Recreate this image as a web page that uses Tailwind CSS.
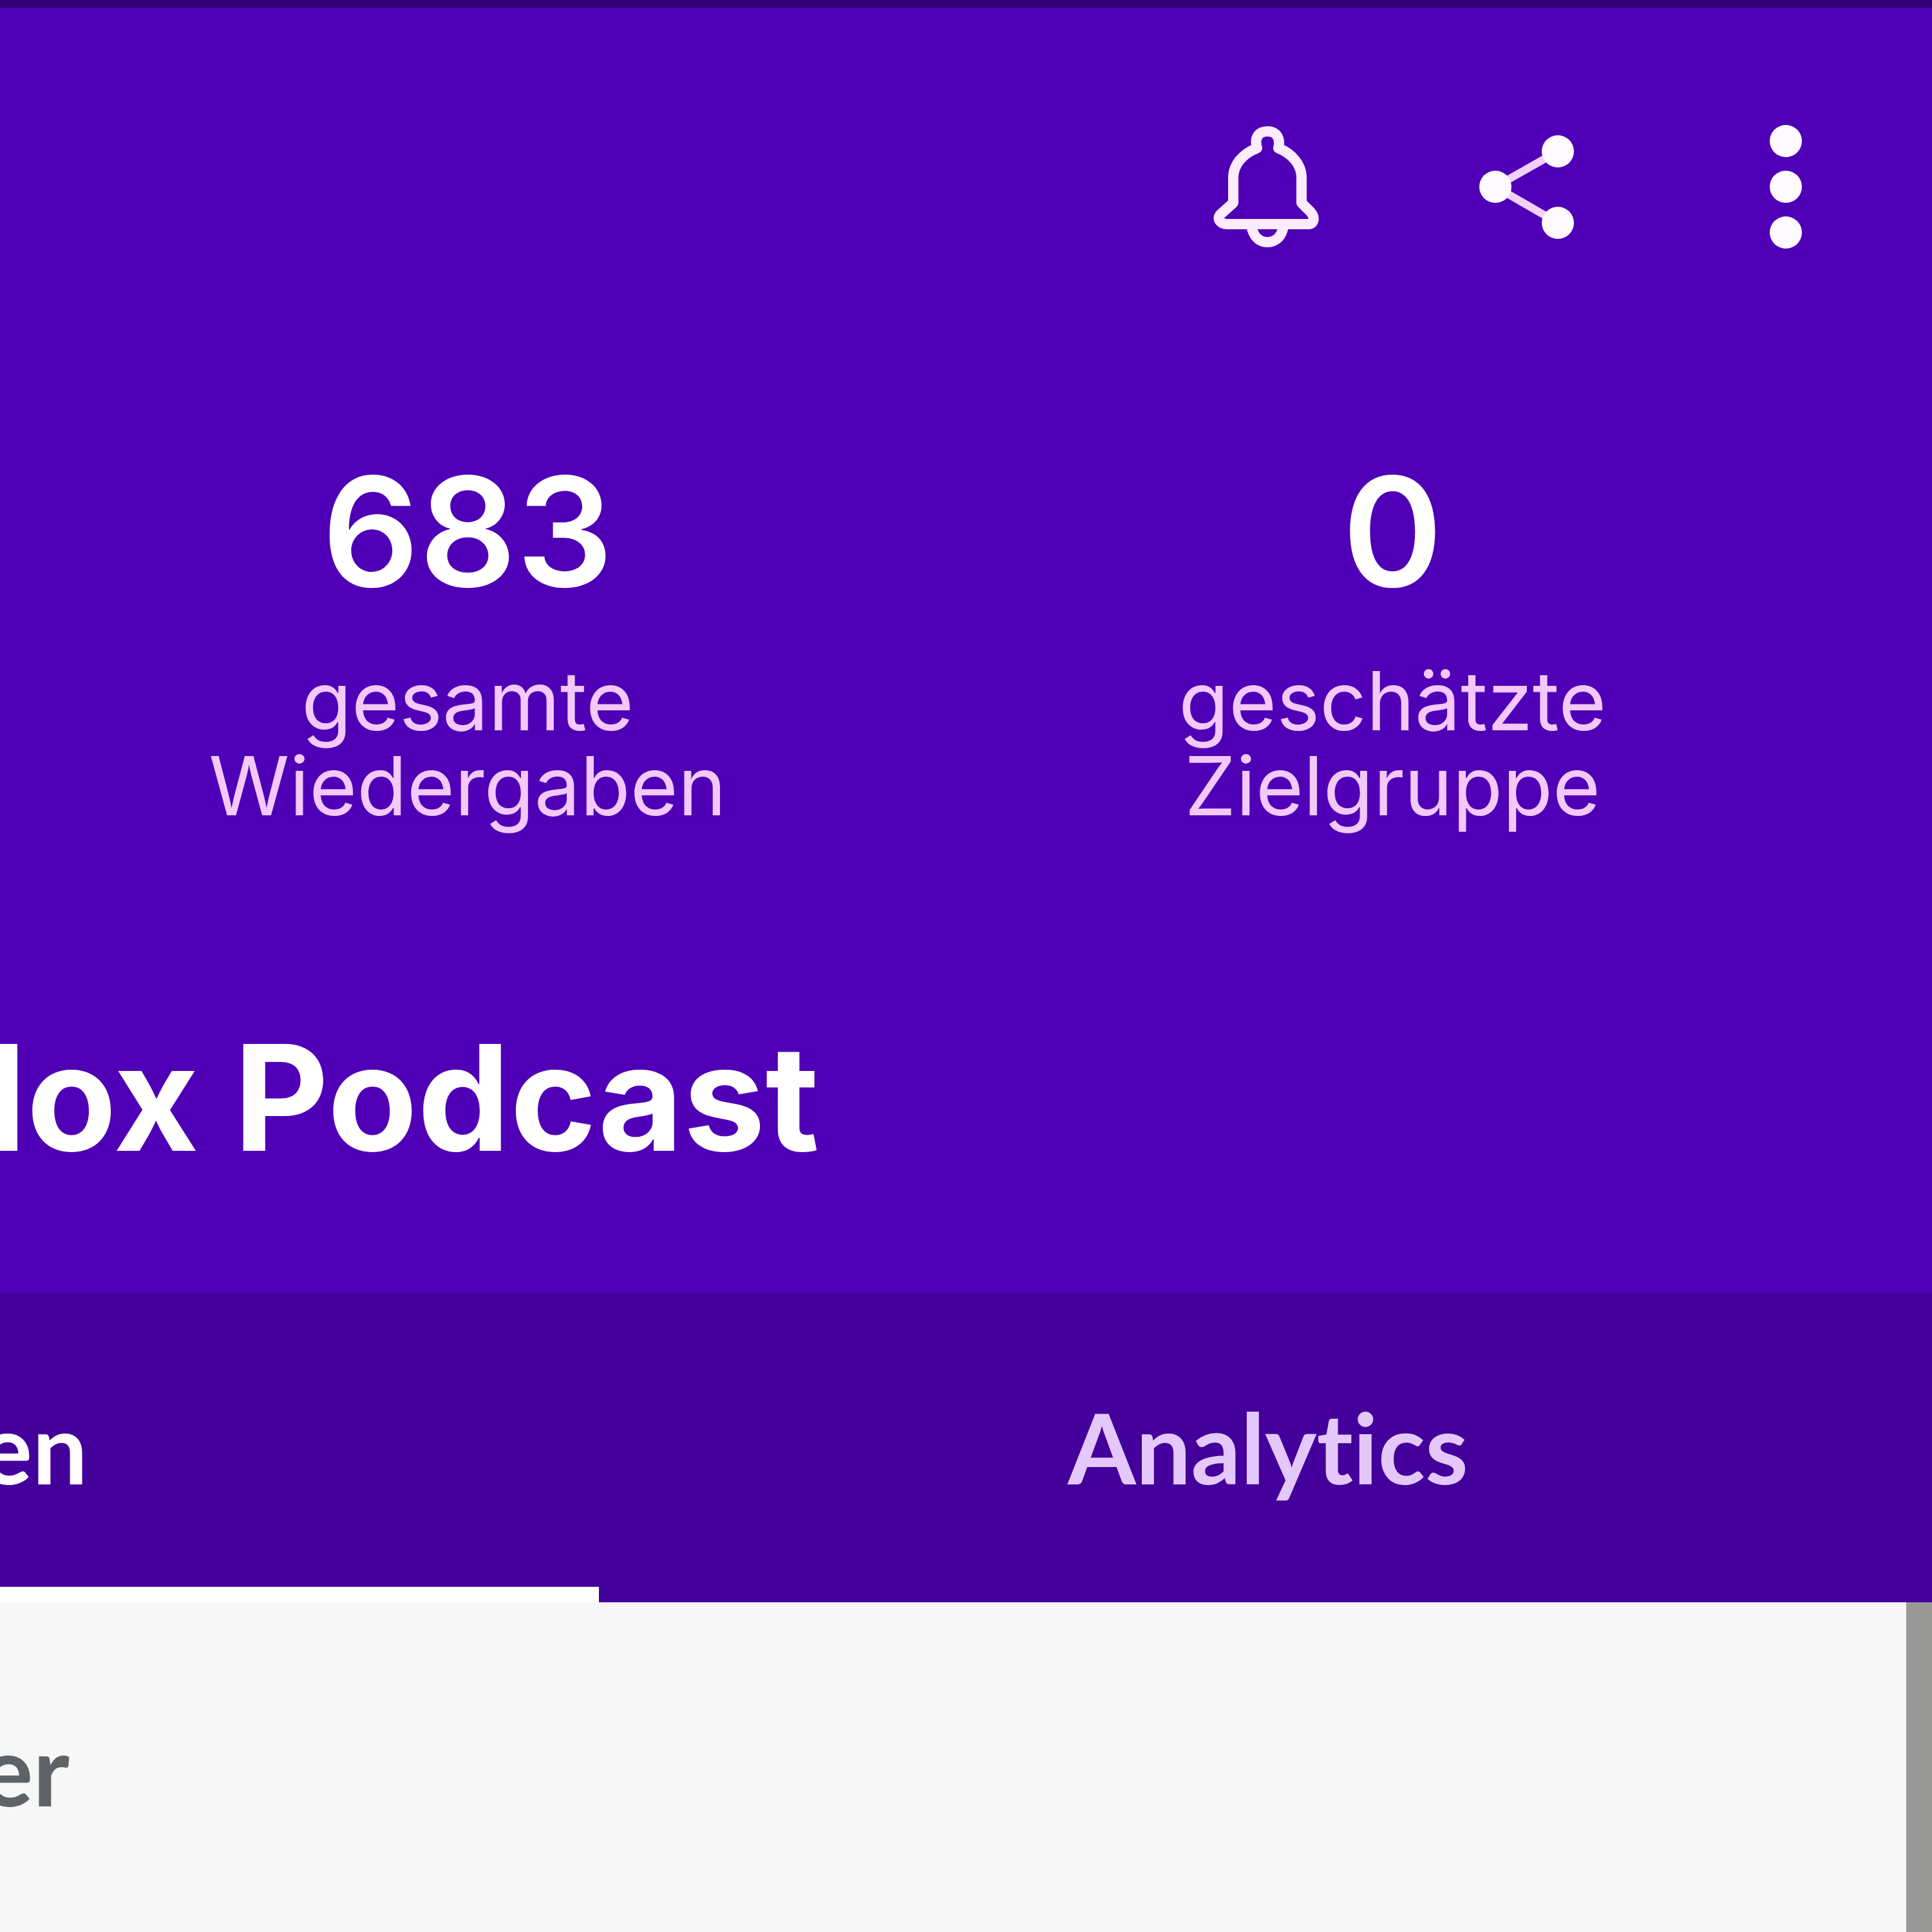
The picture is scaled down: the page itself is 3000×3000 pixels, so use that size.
<!DOCTYPE html>
<html lang="de">
<head>
  <meta charset="UTF-8" />
  <meta name="viewport" content="width=device-width, initial-scale=1" />
  <title>Podcast</title>
  <script src="https://cdn.jsdelivr.net/npm/@tailwindcss/browser@4"></script>
</head>
<body class="min-h-screen flex flex-col overflow-x-hidden bg-[#f7f7f7] font-['Inter',sans-serif]">

  <!-- Header -->
  <header class="border-t-[12px] border-[#320078] bg-[#4f00b7] pt-[158px] pb-[184px] text-white">
    <!-- Actions -->
    <div class="flex justify-end gap-[164px] pr-[107px]">
      <button type="button" aria-label="Benachrichtigungen" class="w-60 h-60">
        <svg class="w-full h-full" viewBox="0 0 240 240" fill="none" stroke="#fdebff" stroke-width="16" stroke-linejoin="round">
          <path d="M107 60C102 43 110 34 123 34S144 43 140 60C162 69 176 86 176 106V145L190 159C198 168 195 178 187 178H60C52 178 43 171 50 163L70 145V106C70 86 84 69 107 60Z" />
          <path d="M98 180C101 198 111 206 123 206S146 198 148 180" />
        </svg>
      </button>
      <button type="button" aria-label="Teilen" class="w-60 h-60">
        <svg class="w-full h-full" viewBox="0 0 240 240" fill="#fffaff">
          <path d="M170 65L73 120L170 176" fill="none" stroke="#f3d0fc" stroke-width="12" />
          <circle cx="170" cy="65" r="25" />
          <circle cx="73" cy="120" r="25" />
          <circle cx="170" cy="176" r="25" />
        </svg>
      </button>
      <button type="button" aria-label="Mehr" class="w-60 h-60">
        <svg class="w-full h-full" viewBox="0 0 240 240" fill="#fffaff">
          <circle cx="120" cy="49" r="25" />
          <circle cx="120" cy="120" r="25" />
          <circle cx="120" cy="191" r="25" />
        </svg>
      </button>
    </div>

    <!-- Stats -->
    <div class="mt-[295px] flex pl-2 text-center">
      <div class="w-[48%]">
        <p class="text-[236px] leading-[240px] font-semibold">683</p>
        <p class="mt-[77px] text-[127px] leading-[132px] text-[#f3c8fb]">gesamte<br />Wiedergaben</p>
      </div>
      <div class="w-[48%]">
        <p class="text-[236px] leading-[240px] font-semibold">0</p>
        <p class="mt-[77px] text-[127px] leading-[132px] text-[#f3c8fb]">geschätzte<br />Zielgruppe</p>
      </div>
    </div>

    <!-- Title, scrolled in from the left -->
    <div class="mt-[298px] w-[1272px] flex justify-end">
      <h1 class="shrink-0 whitespace-nowrap text-[228px] leading-[240px] font-bold">lox Podcast</h1>
    </div>
  </header>

  <!-- Tabs -->
  <nav class="flex bg-[#43009b] font-['Lato',sans-serif] text-[152px] leading-[160px] font-bold [font-variant-ligatures:none]">
    <a href="#" class="w-[31%] border-b-[24px] border-white pt-[158px] pb-[138px] text-white">
      <span class="w-34 flex justify-end">en</span>
    </a>
    <a href="#" class="flex-1 pt-[158px] pb-[162px] pl-2 text-center text-[#e5c8fb]">Analytics</a>
  </nav>

  <!-- Content -->
  <main class="flex-1 border-r-[40px] border-[#999a98] pt-[178px]">
    <h2 class="w-27 flex justify-end font-['Lato',sans-serif] text-[152px] leading-[160px] font-bold text-[#5f6266]">er</h2>
  </main>

</body>
</html>
